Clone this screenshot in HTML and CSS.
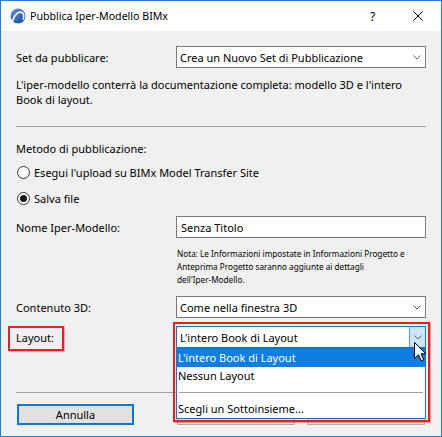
FILE: index.html
```html
<!DOCTYPE html>
<html lang="it">
<head>
<meta charset="utf-8">
<title>Pubblica Iper-Modello BIMx</title>
<link rel="stylesheet" href="styles.css">
</head>
<body>
<div class="window">
  <div class="titlebar">
    <svg class="app-icon" width="16" height="16" viewBox="0 0 16 16">
      <defs>
        <linearGradient id="g" x1="0" y1="0" x2="1" y2="1">
          <stop offset="0" stop-color="#5d97e6"/>
          <stop offset="1" stop-color="#17449a"/>
        </linearGradient>
      </defs>
      <circle cx="8" cy="8" r="7.5" fill="url(#g)"/>
      <path d="M2.5 13 C4.5 6 9 3 12 4.5 C13.6 5.5 14 8.5 13.2 11" fill="none" stroke="#fff" stroke-width="1.6" stroke-linecap="round"/>
    </svg>
    <span class="title">Pubblica Iper-Modello BIMx</span>
    <span class="tb-btn help">?</span>
    <span class="tb-btn close">
      <svg width="10" height="10" viewBox="0 0 10 10"><path d="M0.5 0.5 L9.5 9.5 M9.5 0.5 L0.5 9.5" stroke="#000" stroke-width="1"/></svg>
    </span>
  </div>

  <div class="content">
    <div class="row row-set">
      <span class="label">Set da pubblicare:</span>
      <div class="combo">
        <span class="combo-text">Crea un Nuovo Set di Pubblicazione</span>
        <span class="combo-btn"><svg width="8" height="5" viewBox="0 0 8 5"><path d="M0.5 0.5 L4 4 L7.5 0.5" fill="none" stroke="#5a5a5a" stroke-width="1"/></svg></span>
      </div>
    </div>

    <p class="desc">L'iper-modello conterrà la documentazione completa: modello 3D e l'intero<br>Book di layout.</p>

    <div class="sep sep-top"></div>

    <p class="method">Metodo di pubblicazione:</p>

    <div class="radio radio-first"><span class="radio-circle"></span><span>Esegui l'upload su BIMx Model Transfer Site</span></div>
    <div class="radio radio-second"><span class="radio-circle checked"></span><span>Salva file</span></div>

    <div class="row row-name">
      <span class="label">Nome Iper-Modello:</span>
      <div class="textbox">Senza Titolo</div>
    </div>

    <p class="note">Nota: Le Informazioni impostate in Informazioni Progetto e<br>Anteprima Progetto saranno aggiunte ai dettagli<br>dell'Iper-Modello.</p>

    <div class="row row-3d">
      <span class="label">Contenuto 3D:</span>
      <div class="combo">
        <span class="combo-text">Come nella finestra 3D</span>
        <span class="combo-btn"><svg width="8" height="5" viewBox="0 0 8 5"><path d="M0.5 0.5 L4 4 L7.5 0.5" fill="none" stroke="#5a5a5a" stroke-width="1"/></svg></span>
      </div>
    </div>

    <div class="row row-layout">
      <span class="label">Layout:</span>
      <div class="combo focused">
        <span class="combo-text">L'intero Book di Layout</span>
        <span class="combo-btn"><svg width="8" height="5" viewBox="0 0 8 5"><path d="M0.5 0.5 L4 4 L7.5 0.5" fill="none" stroke="#5a5a5a" stroke-width="1"/></svg></span>
        <div class="dropdown">
          <div class="item selected">L'intero Book di Layout</div>
          <div class="item">Nessun Layout</div>
          <div class="item-sep"><span></span></div>
          <div class="item">Scegli un Sottoinsieme...</div>
        </div>
      </div>
      <span class="mark mark-label"></span>
      <span class="mark mark-combo"></span>
      <svg class="cursor" width="13" height="20" viewBox="0 0 13 20">
        <path d="M0.5 0.5 L0.5 16.5 L4.5 12.8 L7.2 18.8 L9.6 17.8 L7 11.8 L12 11.8 Z" fill="#fff" stroke="#000" stroke-width="1" stroke-linejoin="round"/>
      </svg>
    </div>

    <div class="sep sep-bottom"></div>

    <div class="buttons">
      <div class="btn btn-cancel">Annulla</div>
      <div class="btn btn-mid" aria-hidden="true"></div>
      <div class="btn btn-right" aria-hidden="true"></div>
    </div>
  </div>
</div>
</body>
</html>
```

FILE: styles.css
```css
* {
  box-sizing: border-box;
}

html,
body {
  margin: 0;
  padding: 0;
}

body {
  font-family: "Noto Sans", "Open Sans", sans-serif;
  font-size: 11px;
  color: #000;
  background: #ffffff;
}

.window {
  width: 442px;
  height: 437px;
  border: 1px solid #1b7fd8;
  background: #f0f0f0;
  display: flex;
  flex-direction: column;
  overflow: hidden;
}

/* ---------- title bar ---------- */
.titlebar {
  height: 30px;
  flex: none;
  background: #ffffff;
  display: flex;
  align-items: center;
  padding-left: 9px;
}

.app-icon {
  flex: none;
  margin-right: 4px;
}

.title {
  flex: 1;
  font-size: 10.6px;
}

.tb-btn {
  width: 45px;
  height: 30px;
  display: flex;
  align-items: center;
  justify-content: center;
}

.help {
  font-size: 12px;
}

.close {
  width: 46px;
}

/* ---------- content ---------- */
.content {
  flex: 1;
  padding: 15px 15px 0 15px;
}

.row {
  display: grid;
  grid-template-columns: 160px 1fr;
  align-items: center;
  position: relative;
}

.label {
  line-height: 15px;
  white-space: nowrap;
}

.combo,
.textbox {
  height: 22px;
  border: 1px solid #7a7a7a;
  background: #ffffff;
  display: flex;
  align-items: center;
  position: relative;
}

.combo-text {
  flex: 1;
  padding-left: 3px;
  white-space: nowrap;
}

.combo-btn {
  width: 16px;
  height: 100%;
  display: flex;
  align-items: center;
  justify-content: center;
}

.combo.focused {
  border-color: #0078d7;
}

.combo.focused .combo-btn {
  background: #cce4f7;
  border-left: 1px solid #569de5;
}

.textbox {
  padding-left: 4px;
}

.desc {
  margin: 9px 0 0 0;
  line-height: 15px;
  white-space: nowrap;
}

.sep {
  height: 1px;
  background: #a0a0a0;
}

.sep-top {
  margin-top: 19px;
}

.method {
  margin: 14px 0 0 0;
  line-height: 15px;
}

.radio {
  display: flex;
  align-items: center;
  height: 18px;
  gap: 4px;
  white-space: nowrap;
}

.radio-first {
  margin-top: 7px;
}

.radio-second {
  margin-top: 8px;
}

.radio-circle {
  width: 13px;
  height: 13px;
  border: 1px solid #333333;
  border-radius: 50%;
  background: #ffffff;
  display: flex;
  align-items: center;
  justify-content: center;
  margin-left: 1px;
}

.radio-circle.checked::after {
  content: "";
  width: 7px;
  height: 7px;
  border-radius: 50%;
  background: #1a1a1a;
}

.row-name {
  margin-top: 9px;
}

.note {
  margin: 9px 0 0 161px;
  font-size: 8.2px;
  line-height: 13px;
  white-space: nowrap;
}

.row-3d {
  margin-top: 10px;
}

.row-layout {
  margin-top: 8px;
}

/* ---------- dropdown ---------- */
.dropdown {
  position: absolute;
  left: -1px;
  right: -1px;
  top: 21px;
  height: 71px;
  background: #ffffff;
  border: 1px solid #0078d7;
  z-index: 2;
}

.item {
  height: 18px;
  line-height: 18px;
  padding-left: 1px;
  white-space: nowrap;
}

.item.selected {
  background: #0f7ee0;
  color: #ffffff;
}

.item-sep {
  height: 15px;
  padding: 7px 2px 0 2px;
}

.item-sep span {
  display: block;
  height: 1px;
  background: #a0a0a0;
}

/* ---------- annotation marks ---------- */
.mark {
  position: absolute;
  border: 2px solid #ee1d23;
  z-index: 3;
  pointer-events: none;
}

.mark-label {
  left: -8px;
  top: 0;
  width: 56px;
  height: 25px;
  box-shadow: 1px 1px 0 rgba(120, 0, 0, 0.25);
}

.mark-combo {
  left: 157px;
  top: -4px;
  width: 257px;
  height: 100px;
  box-shadow: 1px 1px 0 rgba(120, 0, 0, 0.3);
}

.cursor {
  position: absolute;
  left: 398px;
  top: 16px;
  z-index: 4;
}

/* ---------- buttons ---------- */
.sep-bottom {
  margin-top: 44px;
}

.buttons {
  display: flex;
  margin-top: 11px;
}

.btn {
  height: 21px;
  width: 118px;
  background: #e1e1e1;
  border: 1px solid #adadad;
  display: flex;
  align-items: center;
  justify-content: center;
}

.btn-cancel {
  margin-left: 1px;
  width: 117px;
  border: 2px solid #0078d7;
}

.btn-mid {
  margin-left: 43px;
}

.btn-right {
  margin-left: 12px;
}
```
